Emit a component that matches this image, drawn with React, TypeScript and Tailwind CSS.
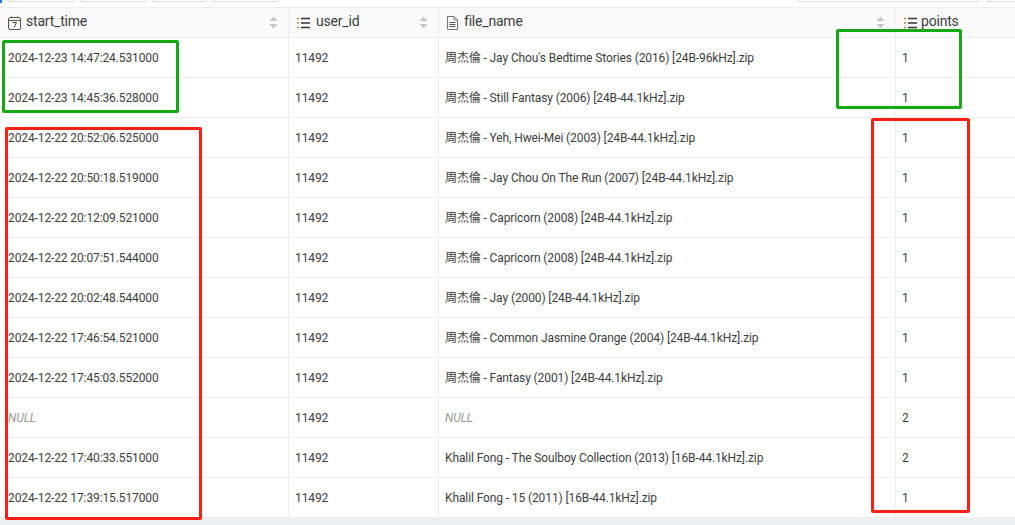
import { ReactNode } from 'react';

const rows = [
  ['2024-12-23 14:47:24.531000', "周杰倫 - Jay Chou's Bedtime Stories (2016) [24B-96kHz].zip", '1'],
  ['2024-12-23 14:45:36.528000', '周杰倫 - Still Fantasy (2006) [24B-44.1kHz].zip', '1'],
  ['2024-12-22 20:52:06.525000', '周杰倫 - Yeh, Hwei-Mei (2003) [24B-44.1kHz].zip', '1'],
  ['2024-12-22 20:50:18.519000', '周杰倫 - Jay Chou On The Run (2007) [24B-44.1kHz].zip', '1'],
  ['2024-12-22 20:12:09.521000', '周杰倫 - Capricorn (2008) [24B-44.1kHz].zip', '1'],
  ['2024-12-22 20:07:51.544000', '周杰倫 - Capricorn (2008) [24B-44.1kHz].zip', '1'],
  ['2024-12-22 20:02:48.544000', '周杰倫 - Jay (2000) [24B-44.1kHz].zip', '1'],
  ['2024-12-22 17:46:54.521000', '周杰倫 - Common Jasmine Orange (2004) [24B-44.1kHz].zip', '1'],
  ['2024-12-22 17:45:03.552000', '周杰倫 - Fantasy (2001) [24B-44.1kHz].zip', '1'],
  [null, null, '2'],
  ['2024-12-22 17:40:33.551000', 'Khalil Fong - The Soulboy Collection (2013) [16B-44.1kHz].zip', '2'],
  ['2024-12-22 17:39:15.517000', 'Khalil Fong - 15 (2011) [16B-44.1kHz].zip', '1'],
];

function SortArrows() {
  return (
    <svg width="9" height="13" viewBox="0 0 9 13" className="shrink-0">
      <path d="M4.5 0.5 L8.5 5 L0.5 5 Z" fill="#c4c7cc" />
      <path d="M4.5 12.5 L8.5 8 L0.5 8 Z" fill="#c4c7cc" />
    </svg>
  );
}

function CalendarIcon() {
  return (
    <svg width="13" height="14" viewBox="0 0 13 14" className="shrink-0">
      <rect x="0.5" y="1.5" width="12" height="12" rx="1.5" fill="none" stroke="#555" />
      <path d="M0.5 4.5 H12.5" stroke="#555" />
      <path d="M3.5 0 V2.5 M9.5 0 V2.5" stroke="#c98a3a" />
      <path d="M4.5 6.5 H8.5 L6 11.5" fill="none" stroke="#444" />
    </svg>
  );
}

function ListIcon() {
  return (
    <svg width="13" height="12" viewBox="0 0 13 12" className="shrink-0">
      <path d="M0 1.5 H2 M0 6 H2 M0 10.5 H2" stroke="#c9822f" strokeWidth="1.6" />
      <path d="M4 1.5 H13 M4 6 H13 M4 10.5 H13" stroke="#333" strokeWidth="1.6" />
    </svg>
  );
}

function FileIcon() {
  return (
    <svg width="11" height="14" viewBox="0 0 11 14" className="shrink-0">
      <path d="M0.5 0.5 H7 L10.5 4 V13.5 H0.5 Z" fill="none" stroke="#777" />
      <path d="M7 0.5 V4 H10.5" fill="none" stroke="#777" />
      <path d="M2.5 6.5 H8.5 M2.5 8.5 H8.5 M2.5 10.5 H8.5" stroke="#555" />
    </svg>
  );
}

function Head({ w, gap, icon, label, arrows }: { w: string; gap: string; icon: ReactNode; label: string; arrows?: boolean }) {
  return (
    <div className={`${w} ${gap} flex items-center pl-2 pr-[10px] border-r border-[#eeeeee]`}>
      {icon}
      <span className="text-[14px] tracking-[-0.2px] text-[#3d3d3d] pb-[2px]">{label}</span>
      {arrows && <span className="ml-auto flex"><SortArrows /></span>}
    </div>
  );
}

function Cell({ w, pad, value }: { w: string; pad: string; value: string | null }) {
  return (
    <div className={`${w} ${pad} flex items-center border-r border-[#eeeeee] whitespace-nowrap overflow-hidden`}>
      {value === null ? <span className="italic text-[#999999]">NULL</span> : value}
    </div>
  );
}

export default function App() {
  return (
    <div className="relative w-[1015px] h-[525px] overflow-hidden bg-white text-[12px] tracking-[-0.11px] text-[#3d3d3d] font-['Roboto','Noto_Sans_CJK_TC',sans-serif]">
      {/* toolbar bottom edge */}
      <div className="flex h-[7px] gap-[6px]">
        <div className="w-[2px] h-[3px] bg-[#1677ff]" />
        <div className="w-[66px] h-[2px] border-x border-b border-[#dddddd]" />
        <div className="w-[66px] h-[2px] border-x border-b border-[#dddddd]" />
        <div className="w-[54px] h-[2px] border-x border-b border-[#dddddd]" />
        <div className="w-[66px] h-[2px] border-x border-b border-[#dddddd]" />
        <div className="w-[180px] h-[2px] ml-auto border-x border-b border-[#dddddd]" />
        <div className="w-[28px] h-[2px] ml-[2px] border-l border-b border-[#dddddd]" />
      </div>

      {/* header */}
      <div className="flex h-[31px] bg-[#fafafa] border-y border-[#eeeeee]">
        <Head w="w-[289px]" gap="gap-[5px]" icon={<CalendarIcon />} label="start_time" arrows />
        <Head w="w-[150px]" gap="gap-[6px]" icon={<ListIcon />} label="user_id" arrows />
        <Head w="w-[457px]" gap="gap-[6px]" icon={<FileIcon />} label="file_name" arrows />
        <div className="flex-1 flex items-center gap-[4px] pl-2">
          <ListIcon />
          <span className="text-[14px] tracking-[-0.2px] text-[#3d3d3d] pb-[2px]">points</span>
        </div>
      </div>

      {/* rows */}
      {rows.map((r, i) => (
        <div key={i} className="flex h-[40px] border-b border-[#eeeeee]">
          <Cell w="w-[289px]" pad="pl-2" value={r[0]} />
          <Cell w="w-[150px]" pad="pl-[6px]" value="11492" />
          <Cell w="w-[457px]" pad="pl-[6px]" value={r[1]} />
          <div className="flex-1 flex items-center pl-[6px]">{r[2]}</div>
        </div>
      ))}

      {/* scrollbar strip */}
      <div className="h-[7px] bg-[#eeeff1]" />

      {/* hand drawn marks on the screenshot */}
      <div className="absolute left-[2px] top-[40px] w-[177px] h-[73px] border-[3px] border-[#16a815] rounded-[2px]" />
      <div className="absolute left-[836px] top-[29px] w-[126px] h-[80px] border-[3px] border-[#16a815] rounded-[2px]" />
      <div className="absolute left-[5px] top-[127px] w-[197px] h-[393px] border-[3px] border-[#ff1f14] rounded-[2px]" />
      <div className="absolute left-[871px] top-[118px] w-[99px] h-[395px] border-[3px] border-[#ff1f14] rounded-[2px]" />
    </div>
  );
}
